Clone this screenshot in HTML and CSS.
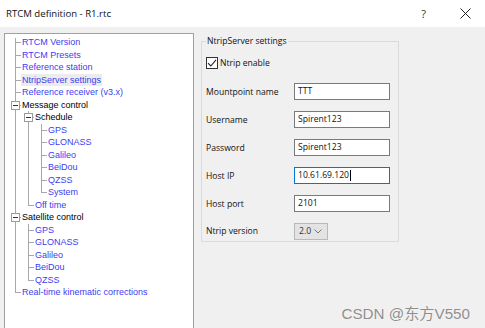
FILE: index.html
```html
<!DOCTYPE html>
<html>
<head>
<meta charset="utf-8">
<link rel="stylesheet" href="styles.css">
</head>
<body>
<div class="titlebar">
  <span class="title">RTCM definition - R1.rtc</span>
  <span class="help">?</span>
  <span class="close"><svg width="11" height="11" viewBox="0 0 11 11"><path d="M0.5 0.5L10.5 10.5M10.5 0.5L0.5 10.5" stroke="#222" stroke-width="1" fill="none"/></svg></span>
</div>
<div class="main">
  <div class="tree">
    <ul class="root">
      <li><span class="lbl link">RTCM Version</span></li>
      <li><span class="lbl link">RTCM Presets</span></li>
      <li><span class="lbl link">Reference station</span></li>
      <li><span class="lbl link sel">NtripServer settings</span></li>
      <li><span class="lbl link">Reference receiver (v3.x)</span></li>
      <li class="open"><span class="box"></span><span class="lbl">Message control</span>
        <ul>
          <li class="open"><span class="box"></span><span class="lbl">Schedule</span>
            <ul>
              <li><span class="lbl link">GPS</span></li>
              <li><span class="lbl link">GLONASS</span></li>
              <li><span class="lbl link">Galileo</span></li>
              <li><span class="lbl link">BeiDou</span></li>
              <li><span class="lbl link">QZSS</span></li>
              <li><span class="lbl link">System</span></li>
            </ul>
          </li>
          <li><span class="lbl link">Off time</span></li>
        </ul>
      </li>
      <li class="open"><span class="box"></span><span class="lbl">Satellite control</span>
        <ul>
          <li><span class="lbl link">GPS</span></li>
          <li><span class="lbl link">GLONASS</span></li>
          <li><span class="lbl link">Galileo</span></li>
          <li><span class="lbl link">BeiDou</span></li>
          <li><span class="lbl link">QZSS</span></li>
        </ul>
      </li>
      <li><span class="lbl link">Real-time kinematic corrections</span></li>
    </ul>
  </div>
  <fieldset class="group">
    <legend>NtripServer settings</legend>
    <div class="check-row"><span class="checkbox"><svg width="10" height="10" viewBox="0 0 10 10"><path d="M1 5.2L3.8 8L9 1.8" stroke="#222" stroke-width="1.1" fill="none"/></svg></span><span>Ntrip enable</span></div>
    <div class="form">
      <span class="flabel">Mountpoint name</span><div class="field">TTT</div>
      <span class="flabel">Username</span><div class="field">Spirent123</div>
      <span class="flabel">Password</span><div class="field">Spirent123</div>
      <span class="flabel">Host IP</span><div class="field focus">10.61.69.120<span class="caret"></span></div>
      <span class="flabel">Host port</span><div class="field">2101</div>
      <span class="flabel">Ntrip version</span><div class="select"><span>2.0</span><svg width="8" height="5" viewBox="0 0 8 5"><path d="M0.5 0.5L4 4L7.5 0.5" stroke="#777" stroke-width="1" fill="none"/></svg></div>
    </div>
  </fieldset>
</div>
<div class="watermark">CSDN @东方V550</div>
</body>
</html>
```

FILE: styles.css
```css
html, body {
  margin: 0;
  padding: 0;
}
body {
  width: 485px;
  height: 328px;
  overflow: hidden;
  background: #f0f0f0;
  position: relative;
  font-family: "Liberation Sans", Arial, sans-serif;
}
.titlebar {
  height: 27px;
  background: #ffffff;
  display: flex;
  align-items: center;
  font-family: "Open Sans", "Liberation Sans", sans-serif;
  font-size: 9.6px;
  color: #111;
}
.title {
  margin-left: 6px;
  flex: 1;
}
.help {
  font-size: 11px;
  color: #333;
  margin-right: 34px;
}
.close {
  display: flex;
  margin-right: 14px;
}
.main {
  display: flex;
  align-items: flex-start;
  padding: 6px 0 0 4px;
  gap: 7px;
}
.tree {
  width: 190px;
  height: 320px;
  box-sizing: border-box;
  background: #fff;
  border: 1px solid #a0a0a0;
  padding-top: 2px;
  font-size: 9px;
}
.tree ul {
  list-style: none;
  margin: 0 0 0 7px;
  padding: 0;
}
.tree ul.root {
  margin-left: 10px;
}
.tree li {
  position: relative;
  padding-left: 6px;
}
.tree li::before {
  content: "";
  position: absolute;
  left: 0;
  top: 0;
  bottom: 0;
  border-left: 1px solid #a8a8a8;
}
.tree li:last-child::before {
  bottom: auto;
  height: 6px;
}
.tree ul.root > li:first-child::before {
  top: 2px;
}
.tree li::after {
  content: "";
  position: absolute;
  left: 0;
  top: 6px;
  width: 6px;
  border-top: 1px solid #a8a8a8;
}
.lbl {
  display: inline-block;
  height: 12.5px;
  line-height: 12.5px;
  padding: 0 1px;
  color: #000;
  white-space: nowrap;
}
.lbl.link {
  color: #3d3df2;
}
.lbl.sel {
  background: #ececec;
}
.box {
  position: absolute;
  left: -4px;
  top: 2px;
  width: 7px;
  height: 7px;
  border: 1px solid #9a9a9a;
  background: #fff;
  z-index: 1;
}
.box::after {
  content: "";
  position: absolute;
  left: 1px;
  top: 3px;
  width: 5px;
  border-top: 1px solid #333;
}
.group {
  margin: 2px 0 0 0;
  padding: 0 4px;
  width: 198px;
  height: 207px;
  box-sizing: border-box;
  border: 1px solid #dadada;
  font-family: "Open Sans", "Liberation Sans", sans-serif;
  font-size: 8.6px;
  color: #111;
}
.group legend {
  padding: 0 1px;
  line-height: 12px;
}
.check-row {
  display: flex;
  align-items: center;
  margin-top: 10px;
  height: 12px;
  gap: 2px;
}
.checkbox {
  width: 10px;
  height: 10px;
  border: 1px solid #333;
  background: #fff;
  display: flex;
}
.form {
  display: grid;
  grid-template-columns: 88px 96px;
  grid-auto-rows: 27.9px;
  align-items: center;
  margin-top: 9px;
}
.field {
  height: 17px;
  box-sizing: border-box;
  border: 1px solid #7a7a7a;
  background: #fff;
  padding-left: 3px;
  line-height: 15px;
  display: flex;
  align-items: center;
}
.field.focus {
  border-color: #0078d7;
}
.caret {
  width: 1px;
  height: 11px;
  background: #000;
  margin-left: 1px;
}
.select {
  width: 34px;
  height: 17px;
  box-sizing: border-box;
  border: 1px solid #b9b9b9;
  background: #e3e3e3;
  display: flex;
  align-items: center;
  justify-content: space-between;
  padding: 0 5px 0 4px;
  color: #333;
}
.watermark {
  position: absolute;
  right: 15px;
  top: 301px;
  font-family: "Liberation Sans", "Noto Sans CJK SC", sans-serif;
  font-size: 15.2px;
  color: #8e8e8e;
  text-shadow: 0 0 1px #fff;
}
```
